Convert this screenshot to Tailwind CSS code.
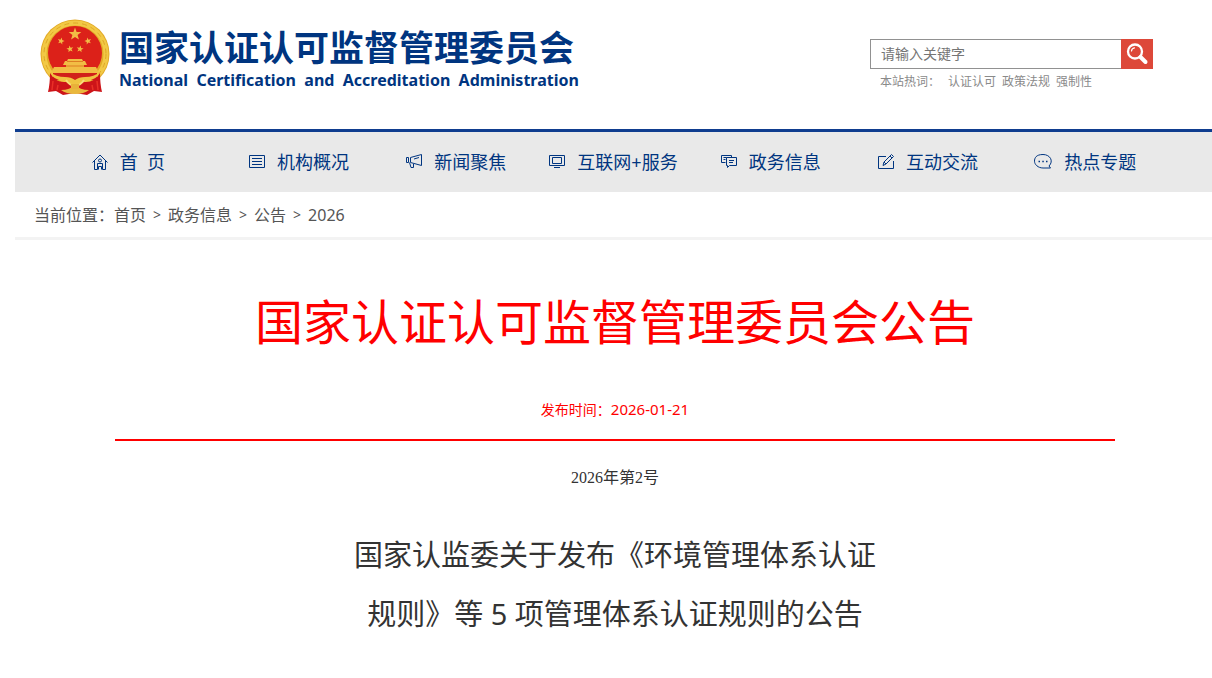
<!DOCTYPE html>
<html lang="zh-CN">
<head>
    <meta charset="UTF-8">
    <meta name="viewport" content="width=device-width, initial-scale=1.0">
    <title>国家认证认可监督管理委员会公告</title>
    <script src="https://cdn.jsdelivr.net/npm/@tailwindcss/browser@4"></script>
</head>
<body class="bg-white pl-[15px] font-['Noto_Sans','Noto_Sans_CJK_SC',sans-serif] text-[#333]">
    <!-- 页头 -->
    <header class="flex justify-between pl-6 pr-[59px] h-[129px]">
        <a href="#" class="flex gap-2 pt-[18px] text-[#003580]">
            <svg class="w-[72px] h-[78px]" viewBox="0 0 72 78" aria-hidden="true">
                <defs>
                    <path id="star" d="M0-6.500l1.600 4.400 4.700.2-3.700 2.900 1.300 4.500L0 2.900l-3.900 2.600 1.300-4.500-3.700-2.900 4.700-.2z"/>
                </defs>
                <circle cx="36" cy="36" r="34.500" fill="#e2a927"/>
                <circle cx="36" cy="36" r="31" fill="none" stroke="#f2c945" stroke-width="5"/>
                <circle cx="36" cy="36" r="31" fill="none" stroke="#dfa628" stroke-dasharray="5 4"/>
                <circle cx="36" cy="35" r="27" fill="#dc2119"/>
                <g fill="#f2bd45">
                    <use href="#star" x="36" y="16"/>
                    <use href="#star" transform="translate(22 23) rotate(15) scale(.55)"/>
                    <use href="#star" transform="translate(49 23) rotate(-15) scale(.55)"/>
                    <use href="#star" transform="translate(31 31) rotate(-10) scale(.55)"/>
                    <use href="#star" transform="translate(41 31) rotate(10) scale(.55)"/>
                    <path d="M29 41h14l1 2h2l2 4h-3v2h12l3 6H12l3-6h12v-2h-3l2-4h2z"/>
                </g>
                <path d="M28 43.500h16M27 48h18" stroke="#dd7f22" fill="none"/>
                <path d="M14 55h44v7H14z" fill="#d1201a"/>
                <path d="M11 55 Q11 66 9 74 L17 73 L24 77 L36 75 L48 77 L55 73 L63 74 Q61 66 61 55 Q55 65 45 64 L36 68 L27 64 Q17 65 11 55" fill="#cd1419"/>
                <path d="M11 54q6 5 15 5 6 0 10 3 4-3 10-3 9 0 15-5-3 8-14 9-6 0-11 5-5-5-11-5-11-1-14-9" fill="#f0c341"/>
                <path d="M22 72q9 0 14-5 5 5 14 5-5 4-14 4t-14-4" fill="#e9b83e"/>
                <path d="M27 62q4 6 9 6t9-6" fill="none" stroke="#f8dc7b" stroke-width="2"/>
                <path d="M32 66h8v5h-8z" fill="#e8b13a"/>
                <path d="M14 63l-1 9M19 67l-1 5M58 63l1 9M53 67l1 5" stroke="#e93027" stroke-width="1.500"/>
            </svg>
            <span class="block pt-[7px]">
                <span class="block text-[35px] leading-[46px] font-bold">国家认证认可监督管理委员会</span>
                <span class="block text-base leading-[18px] font-bold whitespace-pre">National  Certification  and  Accreditation  Administration</span>
            </span>
        </a>
        <form class="pt-[39px]" action="#">
            <div class="flex h-[30px]">
                <input type="text" aria-label="搜索" placeholder="请输入关键字" class="w-[251px] border border-r-0 border-[#919191] px-2.5 text-sm placeholder:text-[#757575] outline-none">
                <button type="button" aria-label="搜索" class="flex w-8 items-center justify-center bg-[#dd4839]">
                    <svg class="size-6" viewBox="0 0 24 24" fill="none" stroke="#fff" stroke-linecap="round" aria-hidden="true">
                        <circle cx="10" cy="9.500" r="7" stroke-width="2.300"/>
                        <path d="M6.500 9a3.500 3.500 0 0 1 3-3.200" stroke-width="1.200"/>
                        <path d="M15.500 15l5 5" stroke-width="4"/>
                    </svg>
                </button>
            </div>
            <div class="flex gap-1.5 pl-2.5 pt-1 text-xs leading-[18px] text-[#8a8a8a]">
                <span class="pr-0.5">本站热词：</span>
                <a href="#">认证认可</a>
                <a href="#">政策法规</a>
                <a href="#">强制性</a>
            </div>
        </form>
    </header>

    <!-- 导航 -->
    <nav class="grid h-[63px] grid-cols-7 border-t-[3px] border-[#0f3d8f] bg-[#e9e9e9] px-12 text-lg text-[#003580]">
        <a href="#" class="flex items-center justify-center gap-3">
            <svg class="size-4" viewBox="0 0 16 16" fill="none" stroke="currentColor" aria-hidden="true"><path d="M.5 8.500L8 1l7.500 7.500M2.500 7v8.500h3v-6h5v6h3V7M6.500 15.500v-3h3v3"/><circle cx="8" cy="6.500" r="1.500"/></svg>
            <span class="min-w-[72px] whitespace-pre">首&nbsp;&nbsp;页</span>
        </a>
        <a href="#" class="flex items-center justify-center gap-3">
            <svg class="size-4" viewBox="0 0 16 16" fill="none" stroke="currentColor" aria-hidden="true"><path d="M.5 1.500h15v12H.5zM3 4.500h10M3 7.500h10M3 10.500h10"/></svg>
            <span class="min-w-[72px]">机构概况</span>
        </a>
        <a href="#" class="flex items-center justify-center gap-3">
            <svg class="size-4" viewBox="0 0 16 16" fill="none" stroke="currentColor" aria-hidden="true"><path d="M.5 3.500h2v5h-2zM4.500 3.500l11-3v11l-11-3zM3.500 8.500l1.500 5h2.500V10M8 5l5-1.500"/></svg>
            <span class="min-w-[72px]">新闻聚焦</span>
        </a>
        <a href="#" class="flex items-center justify-center gap-3">
            <svg class="size-4" viewBox="0 0 16 16" fill="none" stroke="currentColor" aria-hidden="true"><path d="M.5 1.500h15v10H.5zM3.500 3.500h9v6h-9zM5 13.500h6"/></svg>
            <span class="min-w-[72px]">互联网+服务</span>
        </a>
        <a href="#" class="flex items-center justify-center gap-3">
            <svg class="size-4" viewBox="0 0 16 16" fill="none" stroke="currentColor" aria-hidden="true"><path d="M4.500 8.500h-4v-7h10v2M2.500 3.500h3M2.500 5.500h2M5.500 3.500h10v8h-7l-2 2v-2h-1zM8 6.500h5M8 8.500h4"/></svg>
            <span class="min-w-[72px]">政务信息</span>
        </a>
        <a href="#" class="flex items-center justify-center gap-3">
            <svg class="size-4" viewBox="0 0 16 16" fill="none" stroke="currentColor" aria-hidden="true"><path d="M8 2.500H.5v12h15V7M5 11.500l1-3.500 7.500-7.500 2 2L8 10zM12 2l2 2M6 8l2 2"/></svg>
            <span class="min-w-[72px]">互动交流</span>
        </a>
        <a href="#" class="flex items-center justify-center gap-3">
            <svg class="h-4 w-[18px]" viewBox="0 0 18 16" fill="none" stroke="currentColor" aria-hidden="true"><path d="M15 12c5-5 1-11.500-6-11.500S.5 4 .5 7.200 4 14 9 14h7.500z"/><path d="M4.500 7.500H6M8.300 7.500h1.500M12 7.500h1.500" stroke-width="1.500"/></svg>
            <span class="min-w-[72px]">热点专题</span>
        </a>
    </nav>

    <!-- 当前位置 -->
    <div class="flex h-12 items-center gap-[7px] border-b-[3px] border-[#f3f3f3] pl-[19px] text-base text-[#555]">
        <span>当前位置：<a href="#">首页</a></span>
        <span class="text-sm">&gt;</span>
        <a href="#">政务信息</a>
        <span class="text-sm">&gt;</span>
        <a href="#">公告</a>
        <span class="text-sm">&gt;</span>
        <a href="#">2026</a>
    </div>

    <!-- 公告正文 -->
    <main class="pl-[100px] pr-[97px] text-center">
        <h1 class="pt-[46px] text-5xl leading-[72px] text-[#f00]">国家认证认可监督管理委员会公告</h1>
        <p class="mt-[39px] h-11 border-b-2 border-[#f00] text-sm leading-6 text-[#f00]">发布时间：<span class="text-[15px]">2026-01-21</span></p>
        <p class="mt-[25px] font-['Liberation_Serif','Noto_Sans_CJK_SC',serif] text-base leading-6">2026年第2号</p>
        <h2 class="mt-[35px] text-[29px] leading-[59px]">国家认监委关于发布《环境管理体系认证<br>规则》等 5 项管理体系认证规则的公告</h2>
    </main>
</body>
</html>
